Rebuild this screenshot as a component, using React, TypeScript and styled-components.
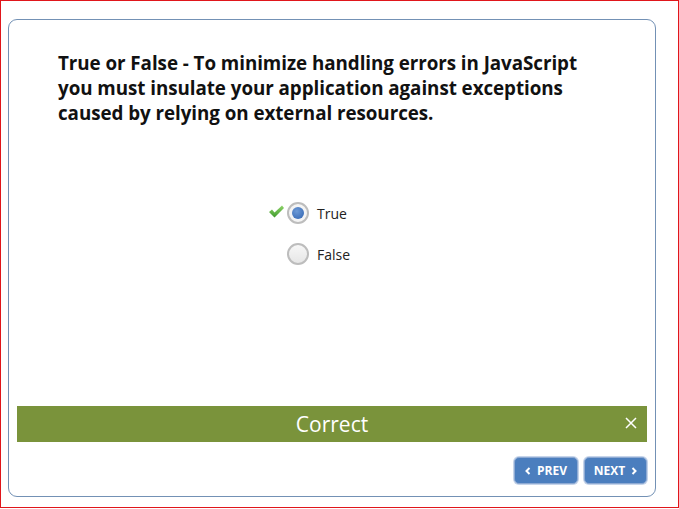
import React from "react";
import styled, { createGlobalStyle } from "styled-components";

const Global = createGlobalStyle`
  html, body { margin: 0; padding: 0; background: #fff; }
  body { font-family: "Open Sans", "DejaVu Sans", sans-serif; }
`;

const Frame = styled.div`
  box-sizing: border-box;
  width: 679px;
  height: 508px;
  border: 1px solid #e0161b;
  padding: 18px 0 0 7px;
`;

const Card = styled.div`
  box-sizing: border-box;
  width: 648px;
  height: 478px;
  border: 1px solid #7391b5;
  border-radius: 9px;
  padding: 0 8px;
  display: flex;
  flex-direction: column;
`;

const Question = styled.div`
  margin: 31px 0 0 41px;
  font-size: 18.8px;
  font-weight: 700;
  line-height: 25px;
  letter-spacing: -0.05px;
  color: #111;
  width: 528px;
`;

const Options = styled.div`
  margin-top: 76px;
  margin-left: 243px;
  display: flex;
  flex-direction: column;
  gap: 19px;
`;

const Option = styled.label`
  display: flex;
  align-items: center;
  height: 22px;
  font-size: 14px;
  color: #222;
`;

const CheckSlot = styled.span`
  width: 27px;
  display: flex;
  justify-content: flex-end;
  padding-right: 2px;
  box-sizing: border-box;
  margin-top: -3px;
`;

const Radio = styled.span<{ $on?: boolean }>`
  box-sizing: border-box;
  width: 22px;
  height: 22px;
  border-radius: 50%;
  border: 2px solid #bdbdbd;
  background: ${(p) => (p.$on ? "#f4f4f4" : "linear-gradient(#f7f7f7, #e6e6e6)")};
  display: flex;
  align-items: center;
  justify-content: center;
  margin-right: 8px;
`;

const Dot = styled.span`
  width: 12px;
  height: 12px;
  border-radius: 50%;
  background: radial-gradient(circle at 40% 35%, #6d9ad6, #2f62b0);
`;

const Spacer = styled.div`
  flex: 1;
`;

const Feedback = styled.div`
  position: relative;
  height: 36px;
  background: #7a933b;
  color: #fff;
  display: flex;
  align-items: center;
  justify-content: center;
  font-size: 21px;
`;

const Close = styled.span`
  position: absolute;
  right: 10px;
  top: 11px;
  display: flex;
`;

const Nav = styled.div`
  display: flex;
  justify-content: flex-end;
  gap: 6px;
  margin-top: 15px;
  margin-bottom: 12px;
`;

const NavButton = styled.button<{ $w: number }>`
  box-sizing: border-box;
  width: ${(p) => p.$w}px;
  height: 27px;
  border: 1px solid #8eaad3;
  border-radius: 5px;
  background: #4b7ebe;
  box-shadow: 0 0 0 1px #c5d4ea;
  color: #fff;
  font-family: "Open Sans", sans-serif;
  font-weight: 700;
  font-size: 12px;
  display: flex;
  align-items: center;
  justify-content: center;
  gap: 6px;
  padding: 0;
`;

const Chevron = ({ dir }: { dir: "l" | "r" }) => (
  <svg width="6" height="8" viewBox="0 0 6 8">
    <path
      d={dir === "l" ? "M4.5 1 L1.5 4 L4.5 7" : "M1.5 1 L4.5 4 L1.5 7"}
      fill="none"
      stroke="#fff"
      strokeWidth="2"
    />
  </svg>
);

const Check = () => (
  <svg width="17" height="13" viewBox="0 0 17 13">
    <defs>
      <linearGradient id="ck" x1="0" y1="0" x2="0" y2="1">
        <stop offset="0" stopColor="#8fd46a" />
        <stop offset="1" stopColor="#3f9a2c" />
      </linearGradient>
    </defs>
    <path d="M1 7 L4 4.5 L6.5 7.5 L14 0.5 L16 3 L6.5 12.5 Z" fill="url(#ck)" />
  </svg>
);

export default function App() {
  return (
    <>
      <Global />
      <Frame>
        <Card>
          <Question>
            True or False - To minimize handling errors in JavaScript you must
            insulate your application against exceptions caused by relying on
            external resources.
          </Question>
          <Options>
            <Option>
              <CheckSlot>
                <Check />
              </CheckSlot>
              <Radio $on>
                <Dot />
              </Radio>
              True
            </Option>
            <Option>
              <CheckSlot />
              <Radio />
              False
            </Option>
          </Options>
          <Spacer />
          <Feedback>
            Correct
            <Close>
              <svg width="12" height="12" viewBox="0 0 12 12">
                <path d="M1 1 L11 11 M11 1 L1 11" stroke="#fff" strokeWidth="1.5" />
              </svg>
            </Close>
          </Feedback>
          <Nav>
            <NavButton $w={64}>
              <Chevron dir="l" />
              PREV
            </NavButton>
            <NavButton $w={63}>
              NEXT
              <Chevron dir="r" />
            </NavButton>
          </Nav>
        </Card>
      </Frame>
    </>
  );
}
